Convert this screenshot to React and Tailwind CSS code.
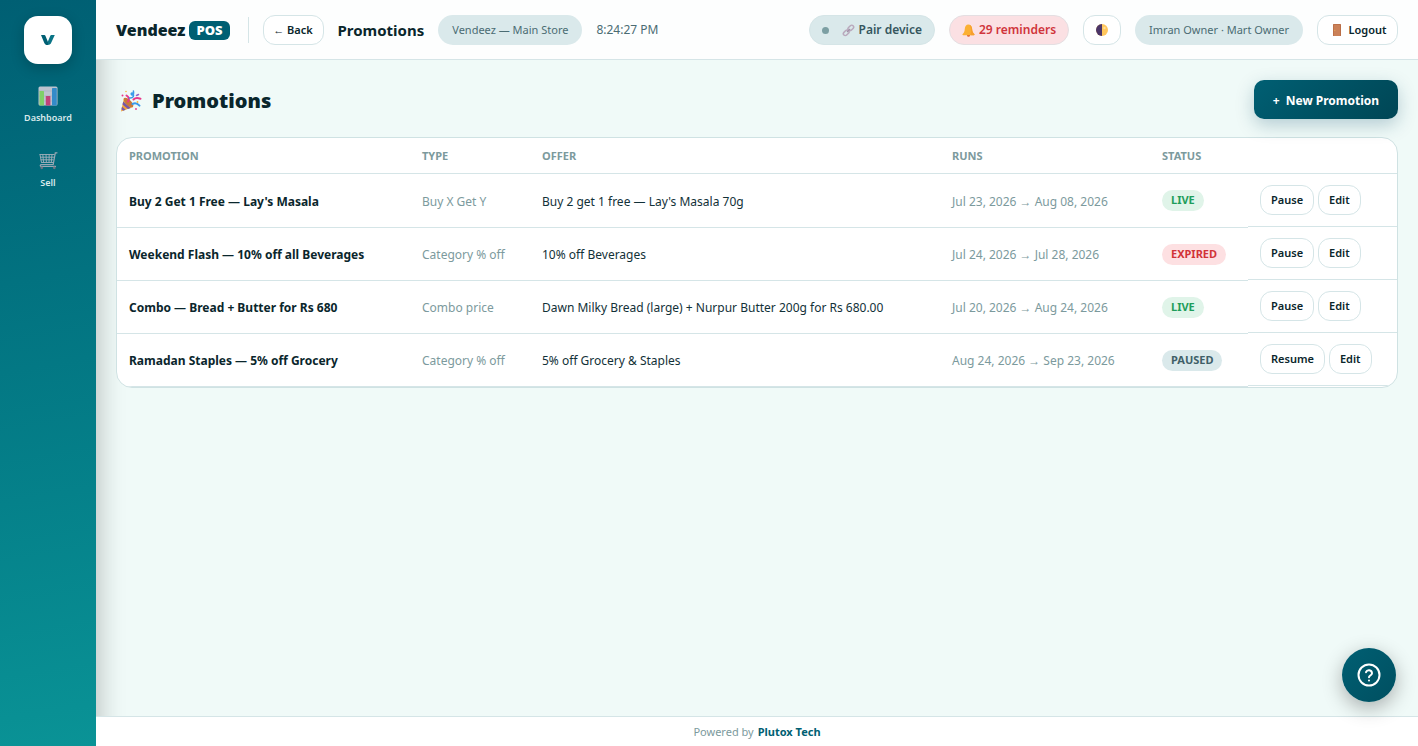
import clsx from 'clsx'

const PROMOTIONS = [
  { name: "Buy 2 Get 1 Free — Lay's Masala", type: 'Buy X Get Y', offer: "Buy 2 get 1 free — Lay's Masala 70g", runs: 'Jul 23, 2026 → Aug 08, 2026', status: 'Live' },
  { name: 'Weekend Flash — 10% off all Beverages', type: 'Category % off', offer: '10% off Beverages', runs: 'Jul 24, 2026 → Jul 28, 2026', status: 'Expired' },
  { name: 'Combo — Bread + Butter for Rs 680', type: 'Combo price', offer: 'Dawn Milky Bread (large) + Nurpur Butter 200g for Rs 680.00', runs: 'Jul 20, 2026 → Aug 24, 2026', status: 'Live' },
  { name: 'Ramadan Staples — 5% off Grocery', type: 'Category % off', offer: '5% off Grocery & Staples', runs: 'Aug 24, 2026 → Sep 23, 2026', status: 'Paused' },
]

const COLUMNS = [
  { label: 'Promotion', width: 'w-[293px]' },
  { label: 'Type', width: 'w-[120px]' },
  { label: 'Offer', width: 'w-[410px]' },
  { label: 'Runs', width: 'w-[210px]' },
  { label: 'Status', width: 'w-[98px]' },
  { label: '', width: 'w-[149px]' },
]

const STATUS_STYLES = {
  Live: 'bg-[#e0f4e9] text-[#1f9d5b]',
  Expired: 'bg-[#fde0e2] text-[#d13438]',
  Paused: 'bg-[#dae9eb] text-[#3f6068]',
}

// ---------- Icons ----------
function LogoMark() {
  return (
    <svg width="16" height="12" viewBox="0 0 16 12" aria-hidden="true">
      <path d="M1 1h3c.8 0 1.200.3 1.500 1L8.600 9.500 8 11c-1.900.2-3.100-.6-3.800-2.300z" fill="#005f73" />
      <path d="M14.800 1h-3c-.9 0-1.300.3-1.600 1L7.800 7.800 8.200 11c1.400-.1 2.400-.9 3-2.200z" fill="#0a7486" />
    </svg>
  )
}

function ChartIcon() {
  return (
    <svg width="20" height="20" viewBox="0 0 20 20" aria-hidden="true">
      <rect x="0.500" y="0.500" width="19" height="19" rx="1.500" fill="#bdc3cf" />
      <path d="M1 5h18M1 10h18M1 15h18" stroke="#a5afbf" strokeWidth="0.600" />
      <rect x="1.500" y="5" width="4.500" height="14.500" rx="0.600" fill="#7fcf69" />
      <rect x="7.800" y="10" width="4.600" height="9.500" rx="0.600" fill="#c0427a" />
      <rect x="14" y="2" width="4.800" height="17.500" rx="0.600" fill="#338bc9" />
    </svg>
  )
}

function CartIcon() {
  return (
    <svg width="20" height="18" viewBox="0 0 20 18" fill="none" aria-hidden="true">
      <path d="M1.500 2.500h15.200M2 5.200h14M2.500 7.800h13M3.200 10.500h12M2 2.500l1.500 8M4.800 2.500l.8 8M8 2.500l.4 8M11.200 2.500l-.2 8M14 2.500l-.7 8" stroke="#a3b0bb" strokeWidth="0.900" />
      <path d="M19 .8h-1.700l-2.100 11.700H3.500c-1.400 0-1.700 1.700-.5 1.900h14.500" stroke="#9aa8b4" strokeWidth="1.200" strokeLinecap="round" />
      <circle cx="3.800" cy="15.800" r="1.400" fill="#6d7482" />
      <circle cx="16.300" cy="15.800" r="1.400" fill="#6d7482" />
    </svg>
  )
}

function PartyIcon() {
  return (
    <svg width="22" height="22" viewBox="0 0 22 22" fill="none" aria-hidden="true">
      <path d="M4 8 1 21.500l12-4.500z" fill="#f2a33a" />
      <path d="M3.200 11.500l7.600 6.400-2.800 1.100-5.500-4.500zM2 16.800l3.600 3-2.300.9-1.900-1.500z" fill="#7857a8" />
      <ellipse cx="8.500" cy="12.500" rx="2.700" ry="6.300" transform="rotate(-45 8.500 12.500)" fill="#c9793a" />
      <path d="M8 11.500c1.800-2.500.8-4.500-1.500-6" stroke="#e8388a" strokeWidth="2" strokeLinecap="round" />
      <path d="M9.500 8c4 .3 5-2.300 3.300-4.500-1-1.200-2.400.3-1 1.300 1.400 1 2.200-.8 1.600-3.800" stroke="#3a9bea" strokeWidth="1.500" strokeLinecap="round" />
      <path d="M13.500 9.500c2.500-2.500 4.500-1.500 7-.8" stroke="#e8388a" strokeWidth="2" strokeLinecap="round" />
      <path d="M12.500 14c2.500-1.300 5-.5 7 1.600" stroke="#3a9bea" strokeWidth="2" strokeLinecap="round" />
      <path d="M16.500 5.500l2-1" stroke="#8d63c9" strokeWidth="1.500" strokeLinecap="round" />
      <circle cx="2.500" cy="5.500" r="1" fill="#e8388a" />
      <circle cx="6" cy="1.500" r="0.800" fill="#f6b73c" />
      <circle cx="17.500" cy="12" r="0.900" fill="#f6b73c" />
      <circle cx="16" cy="19" r="0.900" fill="#e8388a" />
    </svg>
  )
}

function LinkIcon() {
  return (
    <svg width="13" height="13" viewBox="0 0 13 13" fill="none" stroke="#b9a9bd" strokeWidth="1.500" aria-hidden="true">
      <rect x="-3.200" y="-1.900" width="6.400" height="3.800" rx="1.900" transform="translate(8.800 4) rotate(-45)" />
      <rect x="-3.200" y="-1.900" width="6.400" height="3.800" rx="1.900" transform="translate(4.200 8.800) rotate(-45)" />
      <path d="M5 8l3.200-3.200" stroke="#a090a6" strokeWidth="1.200" />
    </svg>
  )
}

function BellIcon() {
  return (
    <svg width="13" height="13" viewBox="0 0 13 13" aria-hidden="true">
      <circle cx="6.500" cy="11.300" r="1.500" fill="#e0662f" />
      <path d="M6.300.6c2.300.1 3.600 1.700 3.800 4.200.2 2.500.7 3.900 2.200 5.200.5.500.2 1.200-.5 1.200H1.200c-.8 0-1-.8-.5-1.200C2.200 8.700 2.600 7.300 2.800 4.800 3 2.300 4.200.6 6.300.6z" fill="#fbb034" />
      <path d="M7.800 1c1.400.5 2.200 2 2.300 3.800.2 2.500.7 3.900 2.200 5.200.5.500.2 1.200-.5 1.200H8.500C9.300 7.500 9 3.500 7.800 1z" fill="#f79f2e" />
    </svg>
  )
}

function HalfMoonIcon() {
  return (
    <svg width="12" height="12" viewBox="0 0 12 12" aria-hidden="true">
      <circle cx="6" cy="6" r="6" fill="#ffc65c" />
      <path d="M6 0a6 6 0 0 0 0 12z" fill="#4b3568" />
      <circle cx="8.500" cy="4" r="1.200" fill="#ffe09a" />
    </svg>
  )
}

function DoorIcon() {
  return (
    <svg width="8" height="12" viewBox="0 0 8 12" aria-hidden="true">
      <rect width="8" height="12" rx="0.500" fill="#b96d46" />
      <rect x="0.800" y="0.800" width="6.200" height="11.200" fill="#cb8158" />
      <circle cx="1.800" cy="6.300" r="0.600" fill="#e8b04e" />
    </svg>
  )
}

function HelpIcon() {
  return (
    <svg width="24" height="24" viewBox="0 0 24 24" fill="none" stroke="#fff" strokeWidth="2" strokeLinecap="round" strokeLinejoin="round" aria-hidden="true">
      <circle cx="12" cy="12" r="10.500" />
      <path d="M9 9.200a3.100 3.100 0 0 1 6 1c0 2-3 2.500-3 4" />
      <path d="M12 17.500v.01" />
    </svg>
  )
}

// ---------- Shared bits ----------
function GhostButton({ className, children, ...props }) {
  return (
    <button
      type="button"
      className={clsx(
        'flex h-[30px] items-center justify-center whitespace-nowrap rounded-xl border border-[#d5e5e7] bg-white pt-px text-[11px] font-semibold text-[#0a262c] hover:bg-[#f0faf8]',
        className,
      )}
      {...props}
    >
      {children}
    </button>
  )
}

function Pill({ children }) {
  return (
    <span className="flex h-[30px] items-center rounded-full bg-[#dae9eb] px-[14px] pt-px text-[11px] text-[#4b6c73]">{children}</span>
  )
}

function SideLink({ icon, label }) {
  return (
    <a href="#" className="flex h-[65px] w-full flex-col items-center gap-[3px] text-[9px] leading-[14px] font-semibold text-[#d9eaec]">
      <span className="grid h-6 place-items-center">{icon}</span>
      {label}
    </a>
  )
}

function Sidebar() {
  return (
    <aside className="flex w-24 shrink-0 flex-col items-center bg-linear-170 from-[#005f73] to-[#0a9396] pt-4 shadow-[4px_0_24px_rgba(0,0,0,0.22)]">
      <a href="#" aria-label="Vendeez" className="mb-5 grid size-12 shrink-0 place-items-center rounded-[14px] bg-white shadow-[0_4px_14px_rgba(0,0,0,0.2)]">
        <LogoMark />
      </a>
      <nav className="w-full">
        <SideLink icon={<ChartIcon />} label="Dashboard" />
        <SideLink icon={<CartIcon />} label="Sell" />
      </nav>
    </aside>
  )
}

function Header() {
  return (
    <header className="relative z-10 flex h-[60px] shrink-0 items-center justify-between border-b border-[#d5e5e7] bg-[#fdfefe] px-5 whitespace-nowrap">
      <div className="flex items-center gap-[14px]">
        <div className="flex items-center gap-1 pt-px text-base font-black text-[#0a262c]">
          Vendeez
          <span className="rounded-md bg-[#005f73] px-[7px] text-[13px] leading-[19px] text-white">POS</span>
        </div>
        <span className="ml-1 h-[26px] w-px bg-[#d5e5e7]" />
        <GhostButton className="w-[61px]">← Back</GhostButton>
        <span className="pt-px text-[15px] font-bold text-[#0a262c]">Promotions</span>
        <Pill>Vendeez — Main Store</Pill>
        <span className="pt-px text-[12px] text-[#4b6c73]">8:24:27 PM</span>
      </div>
      <div className="flex items-center gap-[14px]">
        <button type="button" className="flex h-[30px] items-center rounded-full border border-[#d5e5e7] bg-[#dae9eb] px-3 pt-px text-[12px] font-semibold text-[#35565e]">
          <span className="mr-[13px] size-[7px] rounded-full bg-[#7c9fa3]" />
          <LinkIcon />
          <span className="ml-1">Pair device</span>
        </button>
        <button type="button" className="flex h-[30px] items-center gap-1 rounded-full border border-[#e4dfe2] bg-[#fbe0e3] px-3 pt-px text-[12px] font-semibold text-[#d0353c]">
          <BellIcon />
          29 reminders
        </button>
        <GhostButton className="w-[38px]" aria-label="Toggle theme"><HalfMoonIcon /></GhostButton>
        <Pill>Imran Owner · Mart Owner</Pill>
        <GhostButton className="w-[81px] gap-2 pl-1"><DoorIcon />Logout</GhostButton>
      </div>
    </header>
  )
}

function PromotionTable() {
  return (
    <div className="overflow-hidden rounded-2xl border border-[#cfe2e3] bg-white">
      <table className="w-full table-fixed border-separate border-spacing-0 text-left text-[12px]">
        <thead>
          <tr>
            {COLUMNS.map(({ label, width }) => (
              <th key={label} className={clsx('h-9 border-b border-[#d5e5e7] px-3 pt-0.5 text-[11px] font-bold text-[#7c9a9d] uppercase', width)}>{label}</th>
            ))}
          </tr>
        </thead>
        <tbody className="[&>tr:last-child>td:not(:last-child)]:border-b [&>tr:not(:first-child)>td:not(:last-child)]:border-t">
          {PROMOTIONS.map(({ name, type, offer, runs, status }) => (
            <tr key={name} className="whitespace-nowrap last:h-[54px]">
              <td className="border-[#d5e5e7] px-3 pt-0.5 font-bold text-[#0a262c]">{name}</td>
              <td className="border-[#d5e5e7] px-3 pt-0.5 text-[#7c9a9d]">{type}</td>
              <td className="border-[#d5e5e7] px-3 pt-0.5 text-[#123138]">{offer}</td>
              <td className="border-[#d5e5e7] px-3 pt-0.5 text-[#7c9a9d]">{runs}</td>
              <td className="border-[#d5e5e7] px-3">
                <span className={clsx('flex h-[21px] w-fit items-center rounded-full px-[9px] text-[11px] font-bold uppercase', STATUS_STYLES[status])}>{status}</span>
              </td>
              <td className="flex gap-1 border-b border-[#d5e5e7] px-3 py-[11px]">
                <GhostButton className="px-[10px]">{status === 'Paused' ? 'Resume' : 'Pause'}</GhostButton>
                <GhostButton className="px-[10px]">Edit</GhostButton>
              </td>
            </tr>
          ))}
        </tbody>
      </table>
    </div>
  )
}

export default function App() {
  return (
    <div className="flex min-h-screen bg-[#f0faf8] font-['Noto_Sans','Open_Sans',sans-serif]">
      <Sidebar />
      <div className="flex min-w-0 flex-1 flex-col">
        <Header />
        <main className="flex-1 px-5 pt-5">
          <div className="mb-[18px] flex items-center justify-between">
            <h1 className="flex items-center gap-[10px] pt-0.5 pl-1 text-[20px] font-black text-[#0a262c]">
              <PartyIcon />
              Promotions
            </h1>
            <button type="button" className="flex h-[39px] w-36 items-center justify-center gap-[6px] rounded-[10px] bg-linear-135 from-[#005f73] to-[#004655] pt-0.5 text-[12px] font-bold whitespace-nowrap text-white shadow-[0_6px_18px_rgba(0,70,100,0.25)]">
              <span>+</span>
              New Promotion
            </button>
          </div>
          <PromotionTable />
        </main>
        <footer className="relative z-10 flex h-[30px] items-center justify-center gap-1 border-t border-[#d5e5e7] bg-white pt-px text-[11px] text-[#7c9a9d]">
          Powered by
          <a href="#" className="font-bold text-[#005f73]">Plutox Tech</a>
        </footer>
      </div>
      <button type="button" aria-label="Help" className="fixed right-[22px] bottom-11 z-20 grid size-[54px] place-items-center rounded-full bg-linear-135 from-[#005f73] to-[#004f60] shadow-[0_6px_20px_rgba(0,0,0,0.3)]">
        <HelpIcon />
      </button>
    </div>
  )
}
